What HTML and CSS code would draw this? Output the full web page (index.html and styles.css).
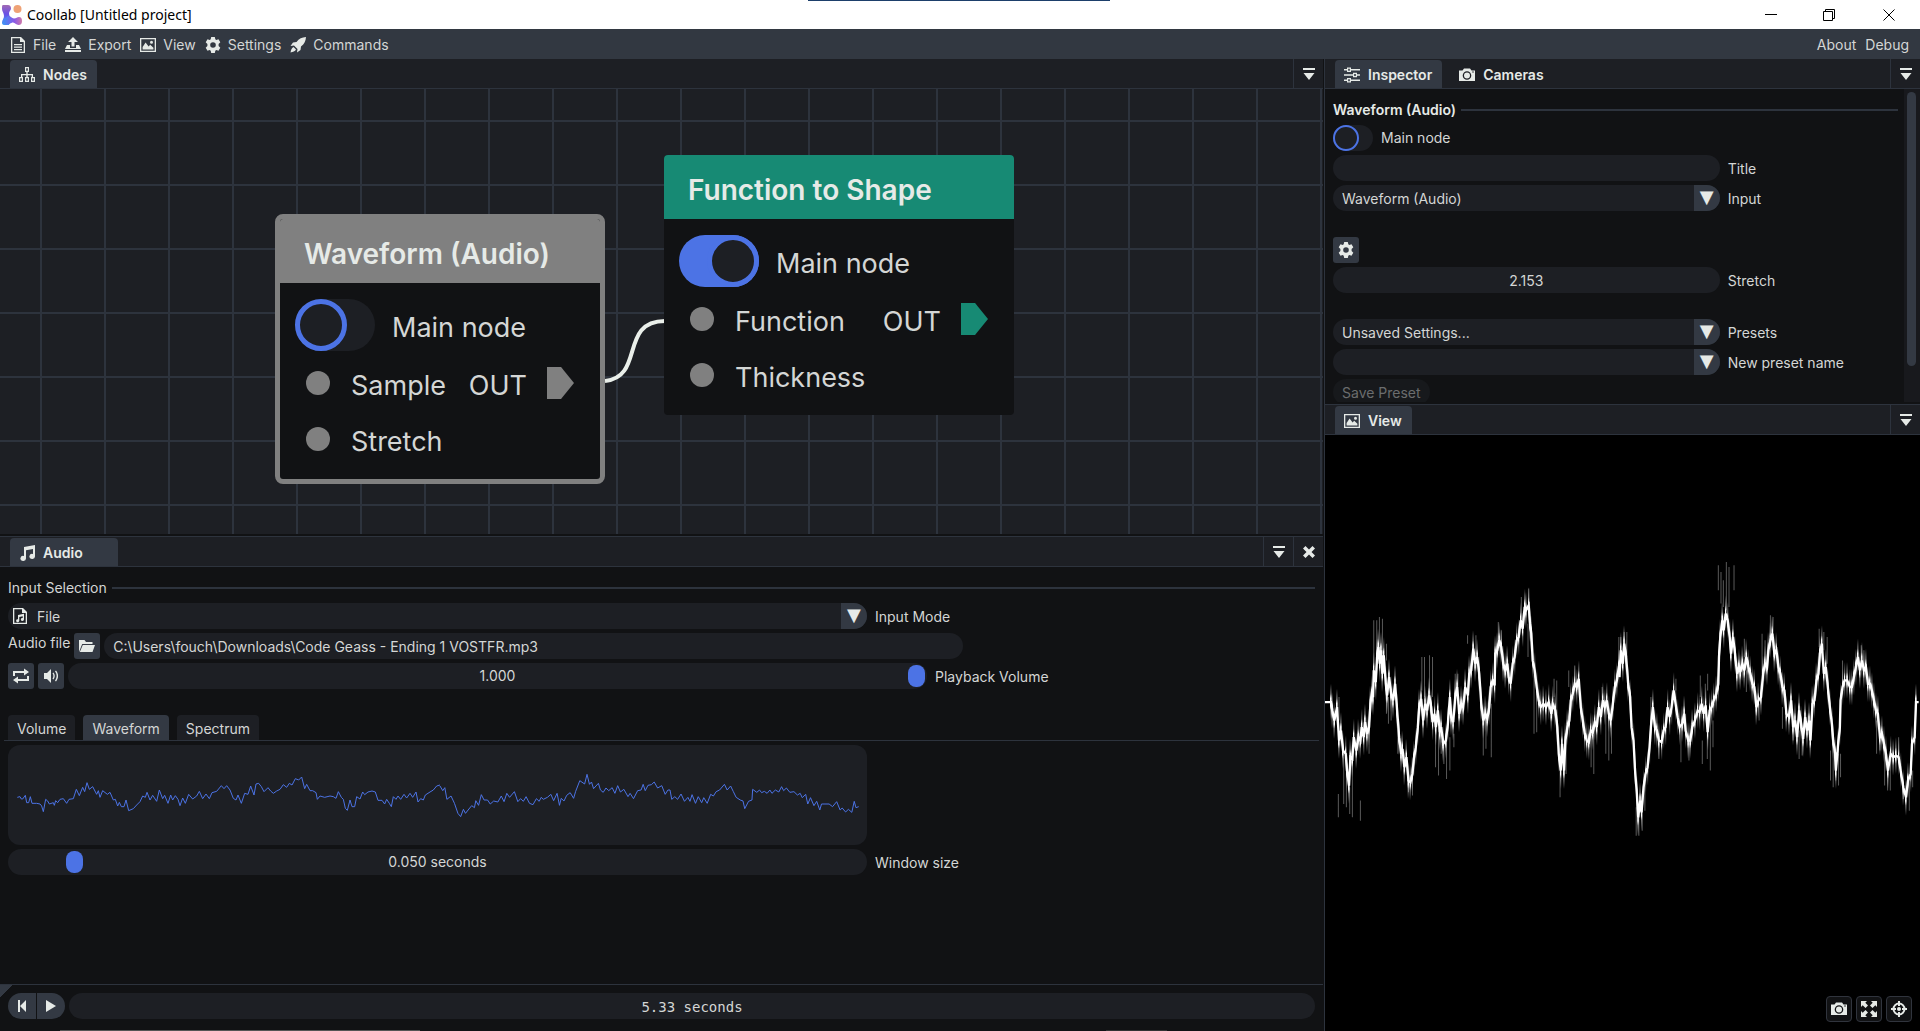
FILE: index.html
```html
<!DOCTYPE html>
<html lang="en">
<head>
<meta charset="utf-8">
<title>Coollab [Untitled project]</title>
<link rel="stylesheet" href="styles.css">
</head>
<body>
<svg class="sprite" aria-hidden="true">
  <symbol id="i-gear" viewBox="0 0 16 16"><path fill-rule="evenodd" d="M6.200 0h3.600l.5 2.300 1 .6 2.200-.7 1.800 3.100-1.700 1.600v2.200l1.700 1.600-1.800 3.100-2.200-.7-1 .6-.5 2.300H6.200l-.5-2.300-1-.6-2.200.7L.7 10.700l1.700-1.600V6.900L.7 5.300l1.800-3.100 2.200.7 1-.6zM8 5.200a2.800 2.800 0 1 0 0 5.600 2.800 2.800 0 0 0 0-5.600z"/></symbol>
  <symbol id="i-image" viewBox="0 0 16 16"><path fill-rule="evenodd" d="M0 1h16v14H0zM1.300 2.300v11.400h13.400V2.300zM2.600 12.500V10l3-4.500 3 4 1.600-1.800 3.200 3v1.800zM11.500 3.700a1.500 1.500 0 1 1 0 3 1.500 1.500 0 0 1 0-3z"/></symbol>
  <symbol id="i-camera" viewBox="0 0 16 16"><path fill-rule="evenodd" d="M0 3.500h3.500L5 1.500h6l1.500 2H16V14H0zM8 4.200a4.300 4.300 0 1 0 0 8.600 4.300 4.300 0 0 0 0-8.600zM8 5.500a3 3 0 1 1 0 6 3 3 0 0 1 0-6zM13.200 4.500v1h1.600v-1z"/></symbol>
  <symbol id="i-list" viewBox="0 0 14 14"><path d="M1 1h12v2H1zM1.500 6h11L7 13z"/></symbol>
</svg>

<header class="titlebar">
  <svg class="logo" viewBox="0 0 20 20" aria-hidden="true">
    <defs>
      <linearGradient id="lg1" x1="0" y1="0" x2="0" y2="1"><stop offset="0" stop-color="#a06ab4"/><stop offset=".45" stop-color="#6a4fe6"/><stop offset="1" stop-color="#3f9cf5"/></linearGradient>
      <linearGradient id="lg2" x1="0" y1="0" x2="1" y2="0"><stop offset="0" stop-color="#3f8ef6"/><stop offset=".6" stop-color="#8a58e6"/><stop offset="1" stop-color="#cf7ba8"/></linearGradient>
    </defs>
    <path fill="url(#lg1)" d="M1 0h5c2 0 3 1.500 3 3.500S7 6 7 8.500s2 4 2 6L7 20H2c-1.500 0-2-1-2-2.500C0 15 2 14 2 11S0 6.500 0 4 0 0 1 0z"/>
    <path fill="url(#lg2)" d="M1 14c3-1 4-3 6-3s2.500 2.500 5 2.500S15 12 17 12s3 1.500 3 4-1 4-3.500 4S13 17.500 11 17.500 7 20 3 20z"/>
    <circle cx="15.500" cy="4" r="4" fill="#efa276"/>
  </svg>
  <span class="title">Coollab [Untitled project]</span>
  <div class="window-buttons">
    <button aria-label="Minimize"><svg viewBox="0 0 12 12"><path d="M0 5.500h12"/></svg></button>
    <button aria-label="Restore"><svg viewBox="0 0 12 12"><path d="M.5 2.500h9v9h-9zM2.500 2.500v-2h9v9h-2"/></svg></button>
    <button aria-label="Close"><svg viewBox="0 0 12 12"><path d="M.5.5l11 11M11.500.5l-11 11"/></svg></button>
  </div>
</header>

<nav class="menubar">
  <button class="menu"><svg class="icon" viewBox="0 0 16 16"><path fill-rule="evenodd" d="M1 0h10l4 4v12H1zM2.300 1.300v13.400h11.400V5H10V1.300zM4 7h8v1.300H4zM4 9.500h8v1.300H4zM4 12h8v1.300H4z"/></svg>File</button>
  <button class="menu"><svg class="icon" viewBox="0 0 16 16"><path d="M8 0l5 5H9.500v4.500h-3V5H3zM2 8h3v3h6V8h3l2 4H0zM0 13h16v2H0z"/></svg>Export</button>
  <button class="menu"><svg class="icon"><use href="#i-image"/></svg>View</button>
  <button class="menu"><svg class="icon"><use href="#i-gear"/></svg>Settings</button>
  <button class="menu"><svg class="icon" viewBox="0 0 16 16"><path d="M16 0c-4 .3-7 1.500-9.500 5L3 5.500.5 9l3.500-.5L7.500 12 7 15.500l3.500-2.500.5-3.500C14.500 7 15.700 4 16 0zM3.500 10C1.500 11 1 13 .5 15.500 3 15 5 14.500 6 12.500z"/></svg>Commands</button>
  <span class="spacer"></span>
  <button class="menu">About</button>
  <button class="menu">Debug</button>
</nav>

<main class="dock">
  <div class="column left">
    <section class="panel nodes-panel">
      <div class="tabbar">
        <button class="tab active"><svg class="icon" viewBox="0 0 16 16"><path fill-rule="evenodd" d="M6 0h4v5H8.700v2H14v3h2v5h-4v-5h.7V8.300H8.700V10H10v5H6v-5h1.300V8.300h-4V10H4v5H0v-5h2V7h5.300V5H6zM7.200 1.200v2.600h1.600V1.200zM1.200 11.200v2.600h1.600v-2.600zM7.200 11.200v2.600h1.600v-2.600zM13.200 11.200v2.600h1.600v-2.600z"/></svg>Nodes</button>
        <span class="spacer"></span>
        <button class="tool" aria-label="List tabs"><svg><use href="#i-list"/></svg></button>
      </div>
      <div class="canvas">
        <svg class="wire" width="80" height="80" viewBox="0 0 80 80"><path d="M8 71C48 67 22 11 68 11"/></svg>
        <article class="node selected">
          <h2>Waveform (Audio)</h2>
          <div class="node-body">
            <label class="node-main"><input class="switch big" type="checkbox"><span>Main node</span></label>
            <div class="pins"><i class="pin"></i><span>Sample</span><span class="out">OUT</span><i class="arrow"></i></div>
            <div class="pins"><i class="pin"></i><span>Stretch</span></div>
          </div>
        </article>
        <article class="node shape">
          <h2>Function to Shape</h2>
          <div class="node-body">
            <label class="node-main"><input class="switch big" type="checkbox" checked><span>Main node</span></label>
            <div class="pins"><i class="pin"></i><span>Function</span><span class="out">OUT</span><i class="arrow"></i></div>
            <div class="pins"><i class="pin"></i><span>Thickness</span></div>
          </div>
        </article>
      </div>
    </section>

    <section class="panel audio-panel">
      <div class="tabbar">
        <button class="tab active wide"><svg class="icon" viewBox="0 0 16 16"><path d="M5 2l11-2v11.500a2.800 2.500 0 1 1-2-2.500V4L7 5.300v8.200A2.800 2.500 0 1 1 5 11z"/></svg>Audio</button>
        <span class="spacer"></span>
        <button class="tool" aria-label="List tabs"><svg><use href="#i-list"/></svg></button>
        <button class="tool" aria-label="Close"><svg viewBox="0 0 14 14"><path d="M3.500 1L7 4.500 10.500 1 13 3.500 9.500 7l3.500 3.500-2.500 2.500L7 9.500 3.500 13 1 10.500 4.500 7 1 3.500z"/></svg></button>
      </div>
      <div class="audio-body">
        <h3 class="separator">Input Selection</h3>
        <div class="row">
          <div class="combo with-icon">
            <svg class="icon" viewBox="0 0 16 16"><path fill-rule="evenodd" d="M1 0h10l4 4v12H1zM2.300 1.300v13.400h11.400V5H10V1.300zM6 7l6-1.200v5.700a1.600 1.500 0 1 1-1.300-1.500V8.300l-3.400.7v3.700A1.600 1.500 0 1 1 6 11.200z"/></svg>
            <select id="mode"><option>File</option></select>
          </div>
          <label for="mode">Input Mode</label>
        </div>
        <div class="row tight">
          <label class="raised" for="file">Audio file</label>
          <button class="square" aria-label="Browse"><svg class="icon" viewBox="0 0 16 16"><path d="M0 14V2h5.500L7 4h6.500v2H3.200zM3.800 7H16l-2.500 7H.8z"/></svg></button>
          <input class="field path" id="file" type="text" value="C:\Users\fouch\Downloads\Code Geass - Ending 1 VOSTFR.mp3">
        </div>
        <div class="row tight">
          <button class="square" aria-label="Loop"><svg class="icon" viewBox="0 0 16 16"><path d="M0 8V3h11V.5L16 4l-5 3.500V5H2v3zM16 8v5H5v2.500L0 12l5-3.500V11h9V8z"/></svg></button>
          <button class="square" aria-label="Mute"><svg class="icon" viewBox="0 0 16 16"><path d="M1 5h3l4-4v14l-4-4H1zM9.500 5.300l1-.8c1.700 2 1.700 5 0 7l-1-.8c1.200-1.700 1.200-3.700 0-5.400zM12 3.300l1-.8c2.800 3.300 2.800 7.700 0 11l-1-.8c2.200-3 2.200-6.400 0-9.400z"/></svg></button>
          <div class="slider"><input id="volume" type="range" min="0" max="1" step="0.001" value="1"><output>1.000</output></div>
          <label class="after" for="volume">Playback Volume</label>
        </div>
        <div class="subtabs">
          <button>Volume</button><button class="active">Waveform</button><button>Spectrum</button>
        </div>
        <svg class="plot" viewBox="0 0 2577 300" preserveAspectRatio="none" role="img" aria-label="Waveform">
          <g transform="translate(-24 -15)"><polyline points="52,172 60,170 64,177 68,177 76,166 80,188 86,188 91,170 96,190 110,190 120,192 125,198 130,215 137,178 143,183 148,192 160,188 163,196 167,182 173,188 180,178 190,176 200,190 207,178 220,176 229,148 238,167 248,142 254,155 261,128 268,148 278,140 290,163 295,152 300,172 308,152 322,163 330,157 340,180 346,178 353,198 358,187 364,200 372,200 378,180 386,212 400,206 410,195 420,185 428,168 436,172 441,157 450,180 458,166 470,184 478,150 488,176 494,166 504,190 512,165 518,180 526,167 534,178 540,197 548,174 556,190 566,163 578,177 590,168 598,154 608,176 618,162 628,176 636,158 650,154 664,137 672,146 680,137 690,150 700,175 708,180 714,165 724,190 734,160 744,163 752,138 762,165 768,132 776,130 784,140 792,155 804,143 812,153 820,160 830,153 840,148 850,134 860,142 868,130 876,135 886,116 896,120 905,111 914,146 920,133 930,152 938,152 948,158 952,178 960,168 974,172 990,168 1000,170 1008,175 1015,155 1024,172 1030,178 1036,205 1042,211 1050,180 1056,200 1064,200 1070,170 1080,177 1088,156 1094,164 1104,156 1116,153 1126,156 1134,181 1146,181 1154,192 1160,178 1168,190 1174,200 1180,170 1188,178 1194,168 1202,178 1212,163 1220,174 1230,160 1238,172 1248,156 1254,186 1262,176 1270,180 1276,165 1290,156 1300,150 1310,138 1320,135"/></g>
          <g transform="translate(1296 -15) scale(1.033 1)"><polyline points="0,138 8,152 14,143 20,178 32,168 42,190 52,220 60,230 68,208 74,220 84,207 92,197 100,203 104,182 112,196 120,164 128,180 138,180 146,192 156,183 168,186 178,168 186,185 194,160 202,172 216,155 226,185 234,176 242,184 250,170 260,190 270,194 280,176 288,184 294,172 300,178 312,172 322,163 330,182 340,160 347,196 352,175 360,183 368,166 378,158 388,175 394,154 406,122 420,132 427,103 434,133 440,126 446,146 460,130 466,150 474,157 482,144 490,152 500,143 508,160 516,137 524,156 534,148 546,170 552,160 562,176 574,152 584,150 590,133 596,152 604,136 614,134 622,126 632,144 644,137 654,163 662,150 668,150 673,178 682,170 690,178 700,162 710,184 720,172 726,184 732,164 742,190 750,170 760,188 766,173 776,190 786,163 794,168 802,155 812,150 826,133 834,150 844,138 852,155 860,172 872,180 880,183 885,206 896,184 906,180 908,148 920,157 928,150 934,158 942,154 950,160 958,150 964,160 974,150 984,156 992,140 998,152 1006,144 1016,157 1028,155 1038,165 1046,160 1052,173 1062,163 1068,192 1076,173 1086,197 1094,184 1103,210 1108,192 1130,192 1140,200 1152,185 1162,210 1168,204 1178,216 1186,208 1196,217 1203,184 1208,203 1216,200"/></g>
        </svg>
        <div class="row">
          <div class="slider"><input id="window" type="range" min="0" max="1" step="0.001" value="0.067"><output>0.050 seconds</output></div>
          <label for="window">Window size</label>
        </div>
      </div>
      <footer class="timeline">
        <div class="transport">
          <button aria-label="Rewind"><svg viewBox="0 0 12 12"><path d="M2 0h2v12H2zM10 0v12L4 6z"/></svg></button>
          <button aria-label="Play"><svg viewBox="0 0 12 12"><path d="M1 0l10 6-10 6z"/></svg></button>
        </div>
        <input class="field time" type="text" aria-label="Time" value="5.33 seconds">
      </footer>
    </section>
  </div>

  <div class="column right">
    <section class="panel inspector-panel">
      <div class="tabbar">
        <button class="tab active"><svg class="icon" viewBox="0 0 16 16"><path fill-rule="evenodd" d="M0 2h3V.5h4V2h9v1.400H7V5H3V3.400H0zM4.200 1.700v2h1.600v-2zM0 7.300h9V5.700h4v1.600h3v1.400h-3v1.600H9V8.700H0zM10.200 7v2h1.600V7zM0 12.600h3V11h4v1.600h9V14H7v1.500H3V14H0zM4.200 12.300v2h1.600v-2z"/></svg>Inspector</button>
        <button class="tab"><svg class="icon"><use href="#i-camera"/></svg>Cameras</button>
        <span class="spacer"></span>
        <button class="tool" aria-label="List tabs"><svg><use href="#i-list"/></svg></button>
      </div>
      <div class="scroll-area">
        <div class="inspector-body">
          <h3 class="separator strong">Waveform (Audio)</h3>
          <label class="row toggle-row"><input class="switch" type="checkbox">Main node</label>
          <div class="row"><input class="field" id="title" type="text"><label for="title">Title</label></div>
          <div class="row"><div class="combo"><select id="input"><option>Waveform (Audio)</option></select></div><label for="input">Input</label></div>
          <button class="square spaced" aria-label="Settings"><svg class="icon"><use href="#i-gear"/></svg></button>
          <div class="row"><input class="field center" id="stretch" type="text" value="2.153"><label for="stretch">Stretch</label></div>
          <div class="row spaced"><div class="combo"><select id="presets"><option>Unsaved Settings...</option></select></div><label for="presets">Presets</label></div>
          <div class="row"><div class="combo"><input id="preset-name" type="text"></div><label for="preset-name">New preset name</label></div>
          <button class="save" disabled>Save Preset</button>
        </div>
        <div class="scrollbar"><i></i></div>
      </div>
    </section>
    <section class="panel view-panel">
      <div class="tabbar">
        <button class="tab active"><svg class="icon"><use href="#i-image"/></svg>View</button>
        <span class="spacer"></span>
        <button class="tool" aria-label="List tabs"><svg><use href="#i-list"/></svg></button>
      </div>
      <div class="view">
        <svg class="render" viewBox="0 0 1782 1785" role="img" aria-label="Rendered waveform">
          <defs>
            <linearGradient id="fade" x1="0" y1="0" x2="0" y2="1"><stop offset="0" stop-color="#fff" stop-opacity="0"/><stop offset=".28" stop-color="#fff" stop-opacity=".4"/><stop offset=".4" stop-color="#fff"/><stop offset=".6" stop-color="#fff"/><stop offset=".72" stop-color="#fff" stop-opacity=".4"/><stop offset="1" stop-color="#fff" stop-opacity="0"/></linearGradient>
            <marker id="streak" markerUnits="userSpaceOnUse" markerWidth="6" markerHeight="110" refX="3" refY="55" orient="0"><rect width="5" height="110" fill="url(#fade)"/></marker>
          </defs>
          <g transform="translate(-18 315)">
            <path class="halo" d="M58 760V830M74 650V790M82 650V800M92 740V820M100 660V830M124 780V840M164 240V380M173 240V360M181 230V330M190 235V340M202 310V360M280 690V765M268 720V755M308 350V450M316 350V470M331 345V460M340 350V470M349 570V680M358 560V705M366 600V640M374 610V670M382 600V715M392 590V690M404 580V620M445 285V310M470 285V340M492 560V645M500 540V625M516 490V650M408 400V470M416 400V440M537 245V300M546 270V300M606 170V240M628 145V190M626 250V350M644 380V580M652 460V575M712 420V520M704 415V470M722 680V770M740 580V700M766 375V430M748 390V440M815 590V680M823 580V700M859 480V640M868 520V660M876 520V640M898 290V370M808 580V620M848 440V480M202 460V520M208 470V550M216 460V540M236 540V640M60 470V540M150 560V640"/>
            <polyline points="18,485 36,485 40,510 46,540 54,500 60,600 66,570 72,630 80,640 84,690 90,735 94,650 100,655 104,590 112,630 118,590 124,600 128,560 134,590 138,545 144,580 150,560 154,490 158,460 162,470 164,390 170,425 174,350 178,320 182,370 186,330 190,400 194,345 200,430 204,465 210,410 216,460 222,480 228,430 234,510 240,590 246,640 250,625 256,680 262,650 268,720 274,725 280,700 284,655 290,620 296,560 300,500 306,475 312,540 318,490 324,510 330,465 336,500 340,545 346,520 350,560 356,510 362,575 366,560 372,610 380,600 386,550 392,470 396,530 402,545 408,470 414,440 420,520 426,490 432,500 438,440 446,465 450,400 456,390 462,325 468,370 474,350 480,400 486,490 492,540 498,520 504,535 510,500 514,440 520,420 526,435 528,340 534,330 540,300 546,320 552,370 558,390 564,370 568,410 574,430 580,370 586,350 592,300 598,290 604,240 610,265 616,200 620,210 628,195 632,250 636,280 640,360 646,390 652,440 658,480 664,500 672,490 680,500 688,485 696,520 700,490 708,510 714,560 718,640 724,690 728,610 734,690 738,600 744,560 750,540 754,480 760,460 766,430 772,440 778,415 784,500 790,540 796,580 802,600 808,605 814,570 820,575 826,545 832,560 838,500 844,530 850,480 856,500 862,480 868,520 874,540 880,490 886,440 892,420 898,380 902,360"/>
          </g>
          <g transform="translate(882 315)">
            <path class="halo" d="M4 290V340M14 275V310M22 275V350M50 800V885M58 820V885M68 760V870M76 700V810M94 470V560M118 590V655M184 560V665M208 600V660M169 415V450M242 405V470M257 430V500M264 400V450M263 570V655M272 510V690M248 600V670M280 540V620M296 75V150M304 95V190M311 120V200M320 65V210M328 80V200M343 75V150M374 295V350M380 390V455M427 280V400M436 300V370M452 225V290M460 230V280M410 480V525M418 490V540M488 500V565M520 560V600M538 570V655M547 590V645M598 265V320M612 275V330M622 290V370M640 620V740M648 690V720M656 640V735M632 630V720M662 640V710M668 360V430M724 315V370M732 330V380M770 540V640M780 590V630M794 610V735M803 660V750M811 660V750M836 590V640M868 700V810M878 690V740M850 740V775"/>
            <polyline points="0,410 4,330 10,370 14,310 20,350 26,430 32,470 36,560 42,600 46,680 52,760 56,830 62,780 66,815 72,740 78,700 84,680 90,620 94,560 100,500 106,560 112,570 118,600 126,605 132,570 138,560 144,500 150,530 156,500 162,450 168,490 174,530 180,560 188,550 194,520 198,570 206,600 212,600 218,560 226,540 234,510 240,515 246,490 252,520 258,495 264,575 270,510 276,500 282,480 290,460 296,430 298,350 302,290 308,240 312,270 318,220 324,240 330,290 334,340 340,290 346,340 352,400 358,380 362,395 368,370 374,390 380,350 386,380 392,400 398,430 404,440 410,500 416,480 424,470 430,400 436,370 442,380 446,330 452,300 458,280 464,340 470,330 476,380 482,400 488,440 494,450 500,520 508,530 514,480 520,560 526,540 532,590 538,510 544,550 550,595 556,530 562,570 568,540 572,600 578,490 584,480 590,420 596,400 600,340 606,310 612,400 618,380 624,440 630,500 636,550 640,600 646,640 648,690 654,620 660,560 662,480 668,440 674,420 682,420 690,440 696,440 702,410 708,380 714,350 720,390 726,360 732,390 738,380 744,430 750,430 756,450 762,480 768,510 774,520 780,590 786,580 792,610 798,640 804,690 812,640 820,650 828,645 836,650 842,690 850,740 858,770 864,720 872,700 876,610 884,590 888,485 896,485"/>
          </g>
        </svg>
        <div class="view-tools">
          <button aria-label="Screenshot"><svg class="icon"><use href="#i-camera"/></svg></button>
          <button aria-label="Fullscreen"><svg class="icon" viewBox="0 0 16 16"><path d="M0 0h6L4.300 1.700 7 4.500 4.500 7 1.700 4.300 0 6zM16 0v6l-1.700-1.700L11.500 7 9 4.500l2.700-2.800L10 0zM0 16v-6l1.700 1.700L4.500 9 7 11.500l-2.700 2.800L6 16zM16 16h-6l1.700-1.700L9 11.500 11.500 9l2.800 2.700L16 10z"/></svg></button>
          <button aria-label="Center camera"><svg class="icon" viewBox="0 0 16 16"><circle cx="8" cy="8" r="5.500" fill="none" stroke="currentColor" stroke-width="2"/><circle cx="8" cy="8" r="2"/><path d="M7 0h2v5H7zM7 11h2v5H7zM0 7h5v2H0zM11 7h5v2h-5z"/></svg></button>
        </div>
      </div>
    </section>
  </div>
</main>
</body>
</html>
```
FILE: styles.css
```css
:root {
  --bg: #111214;
  --frame: #1d1f24;
  --active: #333943;
  --line: #2d333d;
  --text: #d4d6d5;
  --bright: #e6eae7;
  --blue: #4c73e5;
  --green: #178a74;
  --gray: #808080;
}

*, *::before, *::after { box-sizing: border-box; }

body {
  margin: 0;
  height: 100vh;
  min-height: 800px;
  display: flex;
  flex-direction: column;
  background: var(--bg);
  color: var(--text);
  font: 14px/20px Inter, "Liberation Sans", sans-serif;
  overflow: hidden;
}

button, input, select { font: inherit; color: inherit; margin: 0; padding: 0; border: 0; background: none; }
h2, h3 { margin: 0; font: inherit; }
i { display: block; }
svg { display: block; fill: currentColor; }
.sprite { display: none; }
.icon { width: 16px; height: 16px; flex: none; color: var(--bright); }
.spacer { flex: 1; }

/* Title bar */
.titlebar {
  flex: none;
  height: 29px;
  display: flex;
  align-items: center;
  background: linear-gradient(#1d3f6b, #1d3f6b) 808px 0 / 302px 1px no-repeat #fff;
  color: #000;
  padding-left: 2px;
}
.logo { width: 20px; height: 20px; }
.title { flex: 1; margin-left: 5px; font: 14px/20px "Noto Sans", sans-serif; }
.window-buttons { display: flex; }
.window-buttons button { width: 58px; height: 28px; display: grid; place-items: center; }
.window-buttons button:last-child { width: 62px; }
.window-buttons svg { width: 12px; height: 12px; fill: none; stroke: #000; stroke-width: 1; }

/* Menu bar */
.menubar {
  flex: none;
  height: 30px;
  display: flex;
  align-items: center;
  gap: 9px;
  padding: 1px 11px 0 10px;
  background: #323841;
}
.menu { display: flex; align-items: center; gap: 7px; }

/* Docking layout */
.dock {
  flex: 1;
  min-height: 0;
  display: grid;
  grid-template-columns: minmax(0, 1323fr) minmax(0, 596fr);
  gap: 1px;
}
.column { display: grid; min-height: 0; gap: 2px; }
.left { grid-template-rows: minmax(0, 475fr) minmax(0, 495fr); }
.right { grid-template-rows: minmax(0, 343fr) minmax(0, 627fr); border-left: 1px solid var(--line); }
.panel { display: flex; flex-direction: column; min-height: 0; }
.audio-panel, .view-panel { border-top: 1px solid var(--line); }

.tabbar {
  flex: none;
  height: 30px;
  display: flex;
  align-items: flex-end;
  gap: 8px;
  padding-left: 10px;
  background: var(--frame);
  border-bottom: 1px solid var(--line);
}
.tab {
  height: 28px;
  display: flex;
  align-items: center;
  gap: 8px;
  padding: 2px 10px 0 9px;
  border-radius: 4px 4px 0 0;
  color: var(--bright);
  font-weight: 600;
}
.tab.active { background: var(--active); }
.tab.wide { min-width: 108px; }
.tool {
  width: 30px;
  height: 29px;
  display: grid;
  place-items: center;
  border-left: 1px solid var(--line);
  color: var(--bright);
  margin-left: -8px;
}
.tool svg { width: 14px; height: 14px; }

/* Node editor */
.canvas {
  flex: 1;
  position: relative;
  overflow: hidden;
  background-color: var(--frame);
  background-image:
    linear-gradient(var(--line) 2px, transparent 2px),
    linear-gradient(90deg, var(--line) 2px, transparent 2px);
  background-size: 64px 64px;
  background-position: 40px 31px;
}
.node {
  position: absolute;
  display: flex;
  flex-direction: column;
  background: var(--bg);
  border-radius: 4px;
  overflow: hidden;
  font-size: 27px;
  line-height: 36px;
}
.node h2 {
  height: 64px;
  padding: 6px 24px 0;
  font-size: 28px;
  line-height: 58px;
  font-weight: 600;
  color: var(--bright);
}
.selected { left: 275px; top: 125px; width: 330px; height: 270px; border: 5px solid var(--gray); border-radius: 8px; }
.selected h2 { background: var(--gray); }
.shape { left: 664px; top: 66px; width: 350px; height: 260px; }
.shape h2 { background: var(--green); }
.node-body { padding: 16px 26px 0 15px; }
.node-body span { padding-top: 5px; }
.node-main { display: flex; align-items: center; gap: 17px; height: 52px; margin-bottom: 4px; }
.pins { display: flex; align-items: center; height: 56px; padding-left: 11px; }
.pin { width: 24px; height: 24px; margin-right: 21px; border-radius: 50%; background: var(--gray); }
.out { margin-left: auto; margin-right: 20px; }
.arrow { width: 27px; height: 32px; background: var(--gray); clip-path: polygon(0 0, 52% 0, 100% 50%, 52% 100%, 0 100%); }
.shape .arrow { background: var(--green); }
.wire { position: absolute; left: 597px; top: 221px; fill: none; stroke: #eaefea; stroke-width: 4; }

/* Toggle switch */
.switch {
  appearance: none;
  flex: none;
  width: 40px;
  height: 26px;
  border-radius: 13px;
  display: flex;
  background: var(--frame);
}
.switch::before { content: ""; width: 26px; height: 26px; border: 2px solid var(--blue); border-radius: 50%; background: var(--frame); }
.switch:checked { background: var(--blue); justify-content: flex-end; }
.switch.big { width: 80px; height: 52px; border-radius: 26px; }
.switch.big::before { width: 52px; height: 52px; border-width: 5px; }

/* Form rows */
.separator { display: flex; align-items: center; gap: 5px; height: 20px; }
.separator::after { content: ""; flex: 1; height: 2px; background: var(--line); }
.strong { font-weight: 600; color: var(--bright); }
.row { display: flex; align-items: center; gap: 8px; height: 26px; margin-top: 4px; }
.row label { padding-top: 1px; }
.tight { gap: 4px; }
.field { height: 26px; border-radius: 13px; background: var(--frame); padding: 1px 9px 0; outline: none; }
.combo { position: relative; display: flex; height: 26px; border-radius: 13px; background: var(--frame); overflow: hidden; }
.combo select, .combo input { appearance: none; width: 100%; padding: 1px 30px 0 9px; outline: none; }
.combo::after {
  content: "▼";
  position: absolute;
  right: 0;
  top: 0;
  width: 26px;
  height: 26px;
  background: var(--active);
  color: var(--bright);
  font: 18px/24px "DejaVu Sans", sans-serif;
  text-align: center;
  pointer-events: none;
}
.with-icon { align-items: center; padding-left: 4px; }
.square { width: 26px; height: 26px; display: grid; place-items: center; flex: none; border-radius: 3px; background: var(--active); }
.slider { position: relative; display: flex; height: 26px; border-radius: 13px; background: var(--frame); padding: 0 2px; }
.slider input { appearance: none; width: 100%; height: 26px; }
.slider input::-webkit-slider-thumb { appearance: none; width: 17px; height: 22px; border-radius: 8px; background: var(--blue); }
.slider output { position: absolute; inset: 0; text-align: center; line-height: 26px; pointer-events: none; }

/* Audio panel */
.audio-body { flex: 1; min-height: 0; padding: 11px 8px 0; overflow: hidden; }
.audio-body .combo, .audio-body .slider, .audio-body .path { width: calc(100% * 859 / 1307); }
.audio-body .separator { margin-bottom: 5px; }
.row .raised { height: 26px; padding-top: 0; }
.after { margin-left: 4px; }
.subtabs {
  display: flex;
  gap: 8px;
  margin: 26px -4px 4px;
  padding-left: 4px;
  border-bottom: 1px solid var(--line);
}
.subtabs button { height: 25px; padding: 3px 9px 0; border-radius: 4px 4px 0 0; background: var(--frame); }
.subtabs .active { background: var(--active); }
.plot { width: calc(100% * 859 / 1307); height: 100px; border-radius: 12px; background: var(--frame); }
.plot polyline { fill: none; stroke: var(--blue); stroke-width: 1; vector-effect: non-scaling-stroke; }

.timeline {
  flex: none;
  height: 47px;
  display: flex;
  gap: 4px;
  padding: 8px;
  border-top: 1px solid var(--line);
  background:
    linear-gradient(135deg, var(--active) 9px, transparent 9px) no-repeat,
    linear-gradient(#555, #555) 60px 100% / 360px 1px no-repeat,
    linear-gradient(#333, #333) 1106px 100% / 61px 1px no-repeat;
}
.transport { display: flex; gap: 1px; border-radius: 13px; overflow: hidden; height: 26px; flex: none; }
.transport button { width: 28px; height: 26px; display: grid; place-items: center; background: var(--active); color: var(--bright); }
.transport svg { width: 12px; height: 12px; }
.time { flex: 1; text-align: center; font: 14px/20px "DejaVu Sans Mono", monospace; }

/* Inspector */
.scroll-area { flex: 1; min-height: 0; display: flex; }
.inspector-body { flex: 1; min-height: 0; overflow: hidden; padding: 11px 6px 0 8px; }
.inspector-body .separator { margin-bottom: 5px; }
.inspector-body .field, .inspector-body .combo { width: calc(100% * 386 / 564); }
.center { text-align: center; }
.spaced { margin-top: 26px; }
.save { height: 26px; margin-top: 4px; padding: 1px 9px 0; border-radius: 13px; background: #17191c; color: #6b6d6e; }
.scrollbar { width: 16px; padding: 3px 4px 36px 3px; background: #18191d; }
.scrollbar i { height: 100%; border-radius: 5px; background: var(--active); }

/* View */
.view { flex: 1; min-height: 0; position: relative; background: #000; }
.render { width: 100%; height: 100%; }
.render polyline { fill: none; stroke: #fff; stroke-width: 7; marker-mid: url(#streak); }
.halo { fill: none; stroke: #fff; stroke-width: 3; opacity: .35; }
.view-tools { position: absolute; right: 8px; bottom: 9px; display: flex; gap: 4px; }
.view-tools button { width: 26px; height: 26px; display: grid; place-items: center; border: 1px solid #30343d; border-radius: 4px; background: var(--bg); }
```
